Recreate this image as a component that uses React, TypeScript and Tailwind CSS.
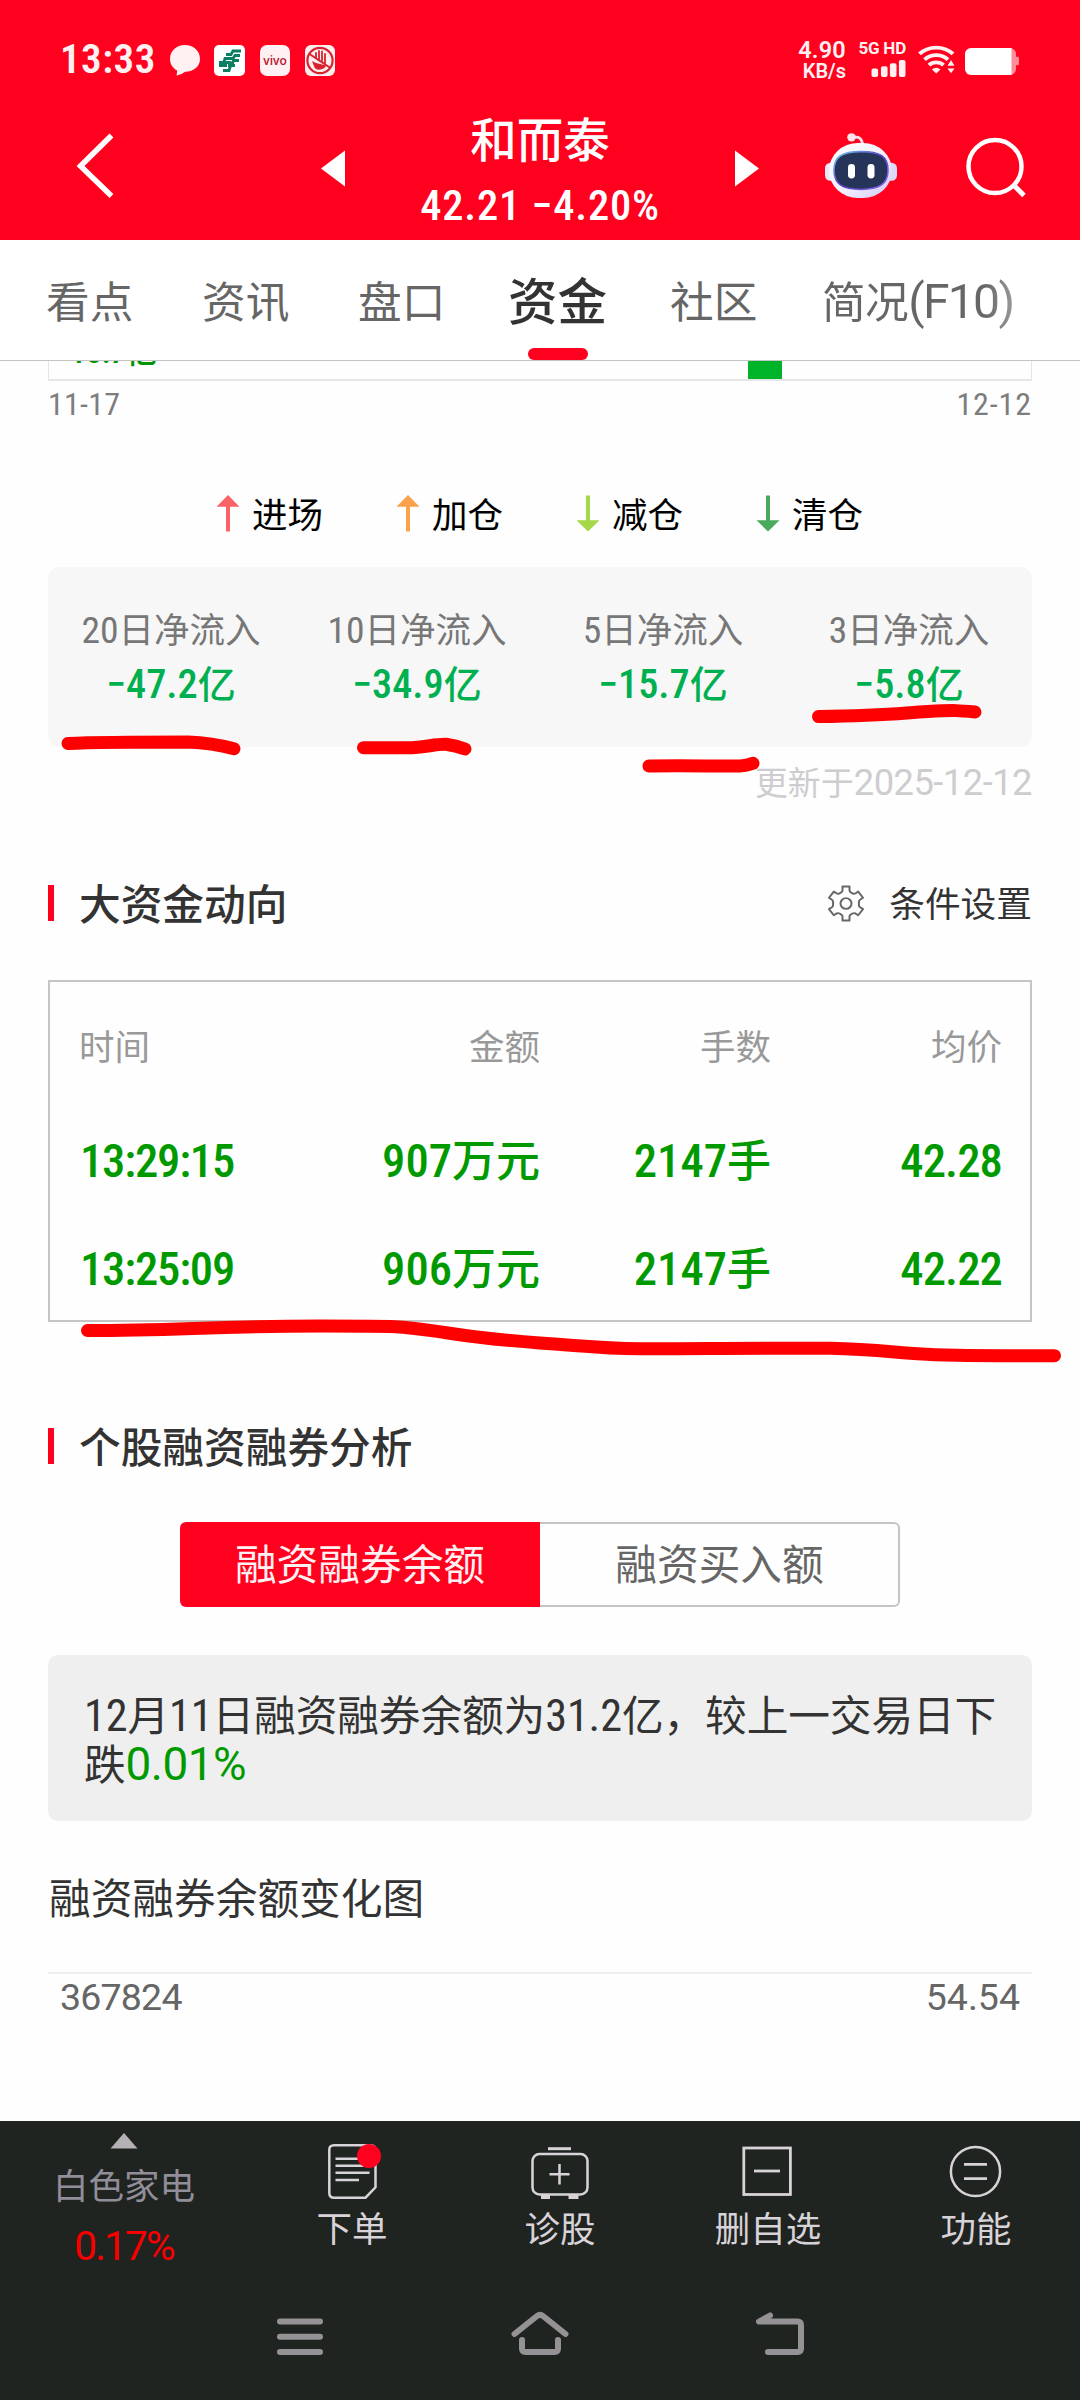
import { Fragment } from "react";

/* Renders mixed CJK / latin text; latin runs use a taller face, optionally condensed. */
function T({ children, narrow = false }: { children: string; narrow?: boolean }) {
  const parts = children.split(/([0-9.:%+\-−()F]+)/).filter(Boolean);
  return (
    <>
      {parts.map((p, i) =>
        /^[0-9.:%+\-−()F]+$/.test(p) ? (
          <span
            key={i}
            className={
              narrow
                ? "text-[1.06em] leading-none [font-stretch:75%]"
                : "text-[1.1em] leading-none tracking-[-0.5px]"
            }
          >
            {p}
          </span>
        ) : (
          <Fragment key={i}>{p}</Fragment>
        ),
      )}
    </>
  );
}

function StatusBar() {
  return (
    <div className="flex h-[100px] items-start pt-[39px] pl-[60px] text-[#fff0f2]">
      <div className="w-[108px] text-[41px] leading-[41px] font-semibold tracking-[0.5px] [font-stretch:75%]">13:33</div>
      <div className="mt-[6px] flex gap-[15px]">
        <svg width="32" height="31" viewBox="0 0 32 31" className="ml-px">
          <path d="M16 0C7.500 0 1 5.800 1 14c0 5.300 3 9.300 7.200 11.600L7.600 30.500c4-.4 6.500-2.500 8.600-3.700C25 26.500 31 21.500 31 14 31 5.800 24.500 0 16 0z" fill="currentColor" />
        </svg>
        <svg width="31" height="31" viewBox="0 0 31 31" className="-ml-[2px]">
          <rect width="31" height="31" rx="5" fill="#fff" />
          <g fill="none" stroke="#0b7f63" strokeWidth="2.800">
            <path d="M27 6H19L17 9.500H12M26 10.500H21L19 13.500H11L10 17" />
            <path d="M5 17.500H16L18 20M5 20.500H13M20 13.500L18 20M25 15.500H20M17 19L15 25.500H9M21 20.500H14" />
          </g>
        </svg>
        <div className="flex h-[31px] w-[30px] items-center justify-center rounded-[7px] bg-[#fff0f3] font-['Open_Sans'] text-[12px] leading-none font-semibold text-[#b9152d]">
          vivo
        </div>
        <svg width="30" height="31" viewBox="0 0 30 31">
          <rect width="30" height="31" rx="6" fill="#ffeef0" />
          <g fill="none" stroke="#d8222f">
            <circle cx="15" cy="15.500" r="12.600" strokeWidth="2.200" />
            <path d="M4.500 9L25.500 23" strokeWidth="2" />
            <path d="M11 13V8M14 15V6M17 16V6.500M20 18V9" strokeWidth="1.800" strokeLinecap="round" />
          </g>
          <path d="M7 16l4 2 10 2.500c-1 4-9 6-11.500 2z" fill="#d8222f" />
        </svg>
      </div>
      <div className="ml-[463px] flex w-[48px] flex-col items-end pt-px font-semibold">
        <span className="text-[23.500px] leading-[21px] tracking-[0.2px]">4.90</span>
        <span className="text-[20px] leading-[20px]">KB/s</span>
      </div>
      <div className="ml-[11px] flex w-[49px] flex-col items-end pt-px">
        <span className="text-[17px] leading-[17px] font-bold tracking-[-0.2px] whitespace-nowrap">5G HD</span>
        <svg width="35" height="17" viewBox="0 0 36 18" className="mt-[3px]" fill="currentColor">
          <rect x="0" y="9" width="7" height="9" rx="2" />
          <rect x="10" y="6.500" width="7" height="11.500" rx="2" />
          <rect x="19.500" y="3.500" width="7" height="14.500" rx="2" />
          <rect x="29" y="0" width="7" height="18" rx="2" />
        </svg>
      </div>
      <svg width="38" height="30" viewBox="0 0 38 32" preserveAspectRatio="none" className="mt-[6px] ml-[12px]">
        <g fill="none" stroke="currentColor" strokeWidth="4">
          <path d="M1.500 9.500a24 24 0 0 1 33.500 0" />
          <path d="M6.500 15.500a17 17 0 0 1 23.500 0" />
          <path d="M11 21.500a10.500 10.500 0 0 1 14.500 0" />
        </g>
        <path d="M14 26a6 6 0 0 1 8.500 0l-4.300 4.500z" fill="currentColor" />
        <path d="M33 16l3.500 6h-7zM33 30l3.500-5h-7z" fill="currentColor" />
      </svg>
      <svg width="56" height="27" viewBox="0 0 56 28" preserveAspectRatio="none" className="mt-[9px] ml-[9px]">
        <path d="M40 0h5a6 6 0 0 1 6 6v3h1.500a1.500 1.500 0 0 1 1.500 1.500v6a1.500 1.500 0 0 1-1.500 1.500H51v4a6 6 0 0 1-6 6h-5z" fill="#ff8d98" />
        <path d="M6 0h40.500v28H6a6 6 0 0 1-6-6V6a6 6 0 0 1 6-6z" fill="#fff" />
      </svg>
    </div>
  );
}

function TitleBar() {
  return (
    <div className="flex h-[140px] items-start text-white">
      <svg width="46" height="68" viewBox="0 0 46 68" className="mt-[32px] ml-[72px]">
        <path d="M39.500 3.500L8.500 34L39.500 64" fill="none" stroke="currentColor" strokeWidth="5.500" />
      </svg>
      <svg width="24" height="37" viewBox="0 0 24 37" className="mt-[50px] ml-[203px]">
        <path d="M0 18.500L24 0.500v36z" fill="currentColor" />
      </svg>
      <div className="flex w-[390px] flex-col items-center">
        <div className="mt-[13px] text-[46.500px] leading-[56px] font-medium">和而泰</div>
        <div className="mt-[13px] text-[42.500px] leading-[48px] font-medium tracking-[0.8px] whitespace-nowrap [font-stretch:75%]">
          42.21 −4.20%
        </div>
      </div>
      <svg width="24" height="37" viewBox="0 0 24 37" className="mt-[50px]">
        <path d="M24 18.500L0 0.500v36z" fill="currentColor" />
      </svg>
      <svg width="74" height="67" viewBox="0 0 74 70" preserveAspectRatio="none" className="mt-[32px] ml-[65px]">
        <defs>
          <linearGradient id="shell" x1="0" y1="0" x2="1" y2="1">
            <stop offset="0" stopColor="#ffffff" />
            <stop offset="0.600" stopColor="#f1edfc" />
            <stop offset="1" stopColor="#cdc6f5" />
          </linearGradient>
          <linearGradient id="rim" x1="0" y1="0" x2="1" y2="1">
            <stop offset="0" stopColor="#6fd0f0" />
            <stop offset="0.500" stopColor="#5a3fc4" />
            <stop offset="1" stopColor="#8a6bf0" />
          </linearGradient>
        </defs>
        <path d="M28 6q10-3 10.500 8" fill="none" stroke="#f6dce8" strokeWidth="3" />
        <circle cx="27.500" cy="5.500" r="4.300" fill="#ffe6ee" />
        <rect x="1" y="32" width="12" height="19" rx="5.500" fill="#e9e7fb" />
        <rect x="61" y="32" width="12" height="19" rx="5.500" fill="#dcd8f7" />
        <rect x="5" y="11.500" width="63" height="57.500" rx="29" fill="url(#shell)" />
        <path d="M37 20.500c19 0 27 5 27 19.500 0 15-9 20-27 20s-27-5-27-20c0-14.500 8-19.500 27-19.500z" fill="#27345a" stroke="url(#rim)" strokeWidth="1.600" />
        <rect x="24" y="33.500" width="7" height="15" rx="3.500" fill="#fff" />
        <rect x="43.500" y="33.500" width="7" height="15" rx="3.500" fill="#fff" />
      </svg>
      <svg width="62" height="66" viewBox="0 0 62 66" className="mt-[34px] ml-[67px]" fill="none" stroke="currentColor" strokeWidth="4.500">
        <circle cx="30" cy="32.500" r="26.500" />
        <path d="M48.500 51L59 61.500" strokeWidth="5" />
      </svg>
    </div>
  );
}

const tabs = [
  { name: "看点", box: "w-[88px]" },
  { name: "资讯", box: "ml-[68px] w-[88px]" },
  { name: "盘口", box: "ml-[68px] w-[88px]" },
  { name: "资金", box: "ml-[62px] w-[100px]", active: true },
  { name: "社区", box: "ml-[62px] w-[88px]" },
];

function Tabs() {
  return (
    <div className="flex h-[121px] border-b-[1.500px] border-[#c4c4c4] bg-white pl-[46px] text-[43.700px] leading-[127px] whitespace-nowrap text-[#666]">
      {tabs.map((t) => (
        <div key={t.name} className={t.box}>
          {t.active ? (
            <div className="relative text-[49.500px] font-medium text-[#333]">
              {t.name}
              <div className="absolute top-[108px] left-[20px] h-[12px] w-[60px] rounded-full bg-[#ff001e]" />
            </div>
          ) : (
            t.name
          )}
        </div>
      ))}
      <div className="ml-[64px] bg-gradient-to-r from-[#666] from-85% to-[#999] bg-clip-text tracking-[-0.6px] text-transparent">
        简况<span className="text-[1.1em] leading-none tracking-[-1.700px]">(F10)</span>
      </div>
    </div>
  );
}

const legend = [
  { name: "进场", color: "#fa6268", up: true },
  { name: "加仓", color: "#fba14b", up: true },
  { name: "减仓", color: "#a4d849", up: false },
  { name: "清仓", color: "#49aa5c", up: false },
];

const flows = [
  ["20日净流入", "−47.2亿"],
  ["10日净流入", "−34.9亿"],
  ["5日净流入", "−15.7亿"],
  ["3日净流入", "−5.8亿"],
];

function FlowSection() {
  return (
    <section>
      <div className="relative h-[20px] overflow-hidden border-x border-b-2 border-[#e6e6e6]">
        <div className="absolute -top-[30px] left-[11px] text-[32px] leading-[42px] font-medium tracking-[-1px] text-[#009400]">
          <T narrow>-18.7亿</T>
        </div>
        <div className="absolute top-0 left-[699px] h-[19px] w-[34px] bg-[#00b42a]" />
      </div>
      <div className="mt-px flex h-[44px] justify-between text-[32px] leading-[45px] text-[#7d7d7d] [font-stretch:75%]">
        <span className="tracking-[0.2px]">11-17</span>
        <span className="tracking-[0.9px]">12-12</span>
      </div>
      <div className="mt-[61px] flex h-[56px] items-center pl-[168px]">
        {legend.map((l) => (
          <div key={l.name} className="flex w-[180px] items-center">
            <svg width="24" height="37" viewBox="0 0 24 38" preserveAspectRatio="none" fill={l.color} className="-mt-[3px]">
              <path d={l.up ? "M12 0L23.500 12H14v25.500h-4V12H.5z" : "M12 37.500L23.500 26H14V.5h-4V26H.5z"} />
            </svg>
            <span className="ml-[12px] pt-px text-[35.500px] leading-[56px] text-black">{l.name}</span>
          </div>
        ))}
      </div>
      <div className="mt-[24px] grid h-[180px] grid-cols-4 rounded-[12px] bg-[#f7f7f7] pt-[37px] text-center">
        {flows.map(([label, value]) => (
          <div key={label} className="whitespace-nowrap">
            <div className="h-[54px] text-[35.500px] leading-[54px] text-[#777]">
              <T narrow>{label}</T>
            </div>
            <div className="h-[54px] text-[38px] leading-[54px] font-medium text-[#00b050]">
              <T narrow>{value}</T>
            </div>
          </div>
        ))}
      </div>
      <div className="mt-[12px] h-[48px] text-right text-[33px] leading-[50px] text-[#cfccd0]">
        <T>更新于2025-12-12</T>
      </div>
    </section>
  );
}

function SectionTitle({ children }: { children: string }) {
  return (
    <div className="flex h-[60px] items-center">
      <div className="h-[36px] w-[6px] bg-[#ff001e]" />
      <h2 className="ml-[25px] pt-[6px] text-[41.700px] leading-[60px] font-medium text-[#333]">{children}</h2>
    </div>
  );
}

const trades = [
  ["13:29:15", "907万元", "2147手", "42.28"],
  ["13:25:09", "906万元", "2147手", "42.22"],
];

const cellStyles = ["text-left tracking-[-1.200px]", "", "", "tracking-[-0.9px]"];

function BigMoney() {
  return (
    <section className="mt-[66px]">
      <div className="flex h-[60px] items-center justify-between">
        <SectionTitle>大资金动向</SectionTitle>
        <div className="flex items-center text-[35.700px] leading-[60px] text-[#333]">
          <svg width="38" height="37" viewBox="0 0 38 38" preserveAspectRatio="none" fill="none" stroke="#666" strokeWidth="2" strokeLinejoin="round" className="mr-[24px]">
            <path d="M15.500 1.500h7v4q0 1.500 1.500 2.200l1.500.9q1.500.8 2.700.1l3-1.900 4.800 6.300-2.900 2q-1.300.9-1.200 2.400v3q0 1.400 1.200 2.300l2.900 2-4.800 6.300-3-1.900q-1.300-.7-2.700.1l-1.500.9q-1.500.8-1.500 2.200v4h-7v-4q0-1.500-1.500-2.200l-1.500-.9q-1.400-.8-2.700-.1l-3 1.900L2 24.800l2.900-2q1.200-.9 1.200-2.300v-3q.1-1.500-1.200-2.400l-2.900-2 4.800-6.300 3 1.900q1.200.7 2.700-.1l1.500-.9q1.500-.7 1.500-2.200z" />
            <circle cx="19" cy="19" r="5.500" />
          </svg>
          <span className="pt-[4px]">条件设置</span>
        </div>
      </div>
      <div className="mt-[47px] h-[342px] border-2 border-[#c5c5c5] px-[30px] pt-[38px]">
        <div className="grid h-[56px] grid-cols-[260px_200px_231px_231px] text-right text-[35.500px] leading-[57px] text-[#999]">
          <span className="-ml-px text-left">时间</span>
          <span>金额</span>
          <span>手数</span>
          <span>均价</span>
        </div>
        <div className="mt-[31px]">
          {trades.map((r) => (
            <div key={r[0]} className="grid h-[108px] grid-cols-[260px_200px_231px_231px] text-right text-[44px] leading-[110px] font-medium whitespace-nowrap text-[#009a00]">
              {r.map((c, i) => (
                <span key={i} className={cellStyles[i]}>
                  <T narrow>{c}</T>
                </span>
              ))}
            </div>
          ))}
        </div>
      </div>
    </section>
  );
}

function MarginTrading() {
  return (
    <section className="mt-[94px]">
      <SectionTitle>个股融资融券分析</SectionTitle>
      <div className="mx-auto mt-[46px] flex h-[85px] w-[720px] text-center text-[41.700px] leading-[88px]">
        <div className="w-[360px] rounded-l-[6px] bg-[#ff001e] text-[#fff0f2]">融资融券余额</div>
        <div className="w-[360px] rounded-r-[6px] border-2 border-l-0 border-[#c5c5c5] pl-px leading-[84px] text-[#666]">融资买入额</div>
      </div>
      <div className="mt-[48px] h-[166px] rounded-[10px] bg-[#efefef] px-[36px] pt-[37px] text-[41.700px] leading-[49px] tracking-[-0.1px] whitespace-nowrap text-[#333]">
        <p className="h-[49px]">
          <T narrow>12月11日融资融券余额为31.2亿，较上一交易日下</T>
        </p>
        <p className="h-[49px]">
          跌
          <span className="text-[#009a00]">
            <T>0.01%</T>
          </span>
        </p>
      </div>
      <h3 className="mt-[49px] pl-px text-[41.700px] leading-[60px] text-[#333]">融资融券余额变化图</h3>
      <div className="mt-[42px] flex h-[60px] justify-between border-t-2 border-[#eee] px-[12px] text-[37.500px] leading-[46px] text-[#666]">
        <span className="tracking-[-0.8px]">367824</span>
        <span>54.54</span>
      </div>
    </section>
  );
}

function BottomBar() {
  const cell = "flex w-[208px] flex-col items-center";
  return (
    <div className="mt-auto h-[279px] bg-[#202420] text-[35.500px] leading-[48px] text-[#d8d3d8]">
      <div className="flex h-[168px]">
        <div className="flex w-[248px] flex-col items-center text-[#918e99]">
          <svg width="28" height="16" viewBox="0 0 28 16" className="mt-[12px]">
            <path d="M14 0L27.500 15.500H.5z" fill="#b5b1b5" />
          </svg>
          <div className="mt-[14px]">白色家电</div>
          <div className="mt-[11px] text-[40.500px] leading-[48px] tracking-[-1.800px] text-[#f80000]">0.17%</div>
        </div>
        <div className={cell}>
          <svg width="58" height="60" viewBox="0 0 58 60" className="mt-[22px]" fill="none" stroke="currentColor" strokeWidth="2.500">
            <path d="M11 2.300h36.500q5 0 5 5v37L42.500 54.700H11q-4.700 0-4.700-4.700V7q0-4.700 4.700-4.700z" />
            <path d="M12.500 15.700h26M12.500 22.700h34M12.500 29.700h34M12.500 37h23.500" />
            <circle cx="46" cy="13" r="12" fill="#ff001e" stroke="none" />
          </svg>
          <div className="mt-[3px]">下单</div>
        </div>
        <div className={cell}>
          <svg width="60" height="60" viewBox="0 0 60 60" className="mt-[22px]" fill="none" stroke="currentColor" strokeWidth="2.500">
            <path d="M18 5.700h23" strokeWidth="3" />
            <rect x="2.500" y="11" width="55" height="40.500" rx="7" />
            <path d="M29.500 21v20.500M19.500 31.300h20" />
            <path d="M11 54h9M38.500 54h10" strokeWidth="4" />
          </svg>
          <div className="mt-[3px]">诊股</div>
        </div>
        <div className={cell}>
          <svg width="60" height="60" viewBox="0 0 60 60" className="mt-[22px]" fill="none" stroke="currentColor" strokeWidth="2.800">
            <rect x="5.800" y="5" width="46.600" height="46.500" />
            <path d="M16 28h26" />
          </svg>
          <div className="mt-[3px]">删自选</div>
        </div>
        <div className={cell}>
          <svg width="60" height="60" viewBox="0 0 60 60" className="mt-[22px]" fill="none" stroke="currentColor" strokeWidth="2.500">
            <circle cx="29.500" cy="28.500" r="24.600" />
            <path d="M18 21.300h23M18 35.700h23" strokeWidth="2.800" />
          </svg>
          <div className="mt-[3px]">功能</div>
        </div>
      </div>
      <div className="flex h-[110px] pt-[17px] pl-[270px]">
        <svg width="60" height="60" viewBox="0 0 60 60" fill="none" stroke="#959295" strokeWidth="6" strokeLinecap="round">
          <path d="M10 15.600h40M10 30.700h40M10 46h40" />
        </svg>
        <svg width="60" height="60" viewBox="0 0 60 60" className="ml-[180px]" fill="none" stroke="#959295" strokeWidth="6" strokeLinecap="round">
          <path d="M4.500 28L27 10q3-2.400 6 0l22.500 18M12 34v8.500q0 3.500 3.500 3.500h29q3.500 0 3.500-3.500V34" />
        </svg>
        <svg width="60" height="60" viewBox="0 0 60 60" className="ml-[180px]" fill="none" stroke="#959295" strokeWidth="6" strokeLinecap="round" strokeLinejoin="round">
          <path d="M20 9.500L9 15.600h38.500q3.500 0 3.500 3.500v23.400q0 3.500-3.500 3.500H18" />
        </svg>
      </div>
    </div>
  );
}

/* Freehand marker strokes drawn on top of the page. */
function Marker() {
  return (
    <svg width="1080" height="2400" viewBox="0 0 1080 2400" className="pointer-events-none absolute top-0 left-0" fill="none" stroke="#ff0000" strokeWidth="13" strokeLinecap="round" strokeLinejoin="round">
      <path d="M68 743.500Q100 742 188 742Q212 743 234 748.700" />
      <path d="M363.500 747.700H412C428 747 434 744 446 744.300Q456 745.500 465 749" />
      <path d="M649 766C690 765 715 766.500 740 766C748 765.500 748 764.500 753 763.300" />
      <path d="M818.500 716.500C890 715.500 900 713 928 711.500C955 710 960 710.500 975 712" />
      <path d="M87.500 1330.500C180 1330.500 210 1326 320 1326C410 1326 400 1326 448 1333C480 1338 500 1340 540 1343C580 1345.500 600 1348.500 640 1348.700C700 1348.700 760 1347.700 830 1348.300C880 1349.500 900 1353.500 935 1354.700C960 1355.500 970 1355.700 1000 1355.700H1054.500" />
    </svg>
  );
}

export default function App() {
  return (
    <div className="relative flex h-[2400px] w-[1080px] flex-col overflow-hidden bg-[#fefefe] font-[Roboto,'Noto_Sans_CJK_SC',sans-serif]">
      <header className="h-[240px] shrink-0 bg-[#ff001e]">
        <StatusBar />
        <TitleBar />
      </header>
      <Tabs />
      <main className="px-[48px]">
        <FlowSection />
        <BigMoney />
        <MarginTrading />
      </main>
      <BottomBar />
      <Marker />
    </div>
  );
}
